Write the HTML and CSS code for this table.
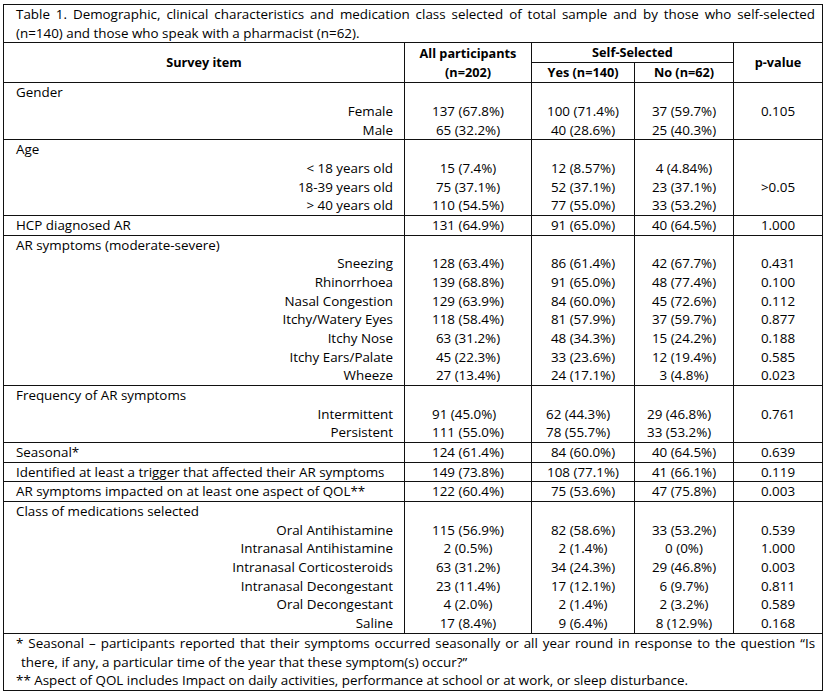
FILE: index.html
```html
<!DOCTYPE html>
<html>
<head>
<meta charset="utf-8">
<link rel="stylesheet" href="styles.css">
</head>
<body>
<table class="tbl">
  <colgroup>
    <col class="c1"><col class="c2"><col class="c3"><col class="c4"><col class="c5">
  </colgroup>
  <thead>
    <tr>
      <td colspan="5" class="title">
        <span class="jline">Table 1. Demographic, clinical characteristics and medication class selected of total sample and by those who self-selected</span>
        <span class="line">(n=140) and those who speak with a pharmacist (n=62).</span>
      </td>
    </tr>
    <tr class="hd">
      <th rowspan="2">Survey item</th>
      <th rowspan="2">All participants<br>(n=202)</th>
      <th colspan="2" class="ss">Self-Selected</th>
      <th rowspan="2">p-value</th>
    </tr>
    <tr class="hd">
      <th>Yes (n=140)</th>
      <th>No (n=62)</th>
    </tr>
  </thead>
  <tbody class="grp">
    <tr><td class="lbl">Gender</td><td></td><td></td><td></td><td></td></tr>
    <tr><td class="sub">Female</td><td>137 (67.8%)</td><td>100 (71.4%)</td><td>37 (59.7%)</td><td>0.105</td></tr>
    <tr><td class="sub">Male</td><td>65 (32.2%)</td><td>40 (28.6%)</td><td>25 (40.3%)</td><td></td></tr>
  </tbody>
  <tbody class="grp">
    <tr><td class="lbl">Age</td><td></td><td></td><td></td><td></td></tr>
    <tr><td class="sub">&lt; 18 years old</td><td>15 (7.4%)</td><td>12 (8.57%)</td><td>4 (4.84%)</td><td></td></tr>
    <tr><td class="sub">18-39 years old</td><td>75 (37.1%)</td><td>52 (37.1%)</td><td>23 (37.1%)</td><td>&gt;0.05</td></tr>
    <tr><td class="sub">&gt; 40 years old</td><td>110 (54.5%)</td><td>77 (55.0%)</td><td>33 (53.2%)</td><td></td></tr>
  </tbody>
  <tbody class="grp">
    <tr><td class="lbl">HCP diagnosed AR</td><td>131 (64.9%)</td><td>91 (65.0%)</td><td>40 (64.5%)</td><td>1.000</td></tr>
  </tbody>
  <tbody class="grp">
    <tr><td class="lbl">AR symptoms (moderate-severe)</td><td></td><td></td><td></td><td></td></tr>
    <tr><td class="sub">Sneezing</td><td>128 (63.4%)</td><td>86 (61.4%)</td><td>42 (67.7%)</td><td>0.431</td></tr>
    <tr><td class="sub">Rhinorrhoea</td><td>139 (68.8%)</td><td>91 (65.0%)</td><td>48 (77.4%)</td><td>0.100</td></tr>
    <tr><td class="sub">Nasal Congestion</td><td>129 (63.9%)</td><td>84 (60.0%)</td><td>45 (72.6%)</td><td>0.112</td></tr>
    <tr><td class="sub">Itchy/Watery Eyes</td><td>118 (58.4%)</td><td>81 (57.9%)</td><td>37 (59.7%)</td><td>0.877</td></tr>
    <tr><td class="sub">Itchy Nose</td><td>63 (31.2%)</td><td>48 (34.3%)</td><td>15 (24.2%)</td><td>0.188</td></tr>
    <tr><td class="sub">Itchy Ears/Palate</td><td>45 (22.3%)</td><td>33 (23.6%)</td><td>12 (19.4%)</td><td>0.585</td></tr>
    <tr><td class="sub">Wheeze</td><td>27 (13.4%)</td><td>24 (17.1%)</td><td>3 (4.8%)</td><td>0.023</td></tr>
  </tbody>
  <tbody class="grp">
    <tr><td class="lbl">Frequency of AR symptoms</td><td></td><td></td><td></td><td></td></tr>
    <tr><td class="sub">Intermittent</td><td class="fa">91 (45.0%)</td><td class="fy">62 (44.3%)</td><td class="fn">29 (46.8%)</td><td>0.761</td></tr>
    <tr><td class="sub">Persistent</td><td class="fa">111 (55.0%)</td><td class="fy">78 (55.7%)</td><td class="fn">33 (53.2%)</td><td></td></tr>
  </tbody>
  <tbody class="grp">
    <tr><td class="lbl">Seasonal*</td><td>124 (61.4%)</td><td>84 (60.0%)</td><td>40 (64.5%)</td><td>0.639</td></tr>
  </tbody>
  <tbody class="grp">
    <tr><td class="lbl">Identified at least a trigger that affected their AR symptoms</td><td>149 (73.8%)</td><td>108 (77.1%)</td><td>41 (66.1%)</td><td>0.119</td></tr>
  </tbody>
  <tbody class="grp">
    <tr><td class="lbl">AR symptoms impacted on at least one aspect of QOL**</td><td>122 (60.4%)</td><td>75 (53.6%)</td><td>47 (75.8%)</td><td>0.003</td></tr>
  </tbody>
  <tbody class="grp">
    <tr><td class="lbl">Class of medications selected</td><td></td><td></td><td></td><td></td></tr>
    <tr><td class="sub">Oral Antihistamine</td><td>115 (56.9%)</td><td>82 (58.6%)</td><td>33 (53.2%)</td><td>0.539</td></tr>
    <tr><td class="sub">Intranasal Antihistamine</td><td>2 (0.5%)</td><td>2 (1.4%)</td><td>0 (0%)</td><td>1.000</td></tr>
    <tr><td class="sub">Intranasal Corticosteroids</td><td>63 (31.2%)</td><td>34 (24.3%)</td><td>29 (46.8%)</td><td>0.003</td></tr>
    <tr><td class="sub">Intranasal Decongestant</td><td>23 (11.4%)</td><td>17 (12.1%)</td><td>6 (9.7%)</td><td>0.811</td></tr>
    <tr><td class="sub">Oral Decongestant</td><td>4 (2.0%)</td><td>2 (1.4%)</td><td>2 (3.2%)</td><td>0.589</td></tr>
    <tr><td class="sub">Saline</td><td>17 (8.4%)</td><td>9 (6.4%)</td><td>8 (12.9%)</td><td>0.168</td></tr>
  </tbody>
  <tfoot>
    <tr>
      <td colspan="5" class="note">
        <p class="fn1"><span class="jline">* Seasonal – participants reported that their symptoms occurred seasonally or all year round in response to the question “Is</span><span class="line">there, if any, a particular time of the year that these symptom(s) occur?”</span></p>
        <p class="fn2">** Aspect of QOL includes Impact on daily activities, performance at school or at work, or sleep disturbance.</p>
      </td>
    </tr>
  </tfoot>
</table>
</body>
</html>
```

FILE: styles.css
```css
html, body {
  margin: 0;
  padding: 0;
  background: #ffffff;
}

body {
  font-family: "Open Sans", "Noto Sans", sans-serif;
  font-size: 13.4px;
  color: #000000;
}

.tbl {
  margin: 4px 0 0 3px;
  border-collapse: collapse;
  border: 1px solid #111111;
  table-layout: fixed;
  width: 820px;
}

.c1 { width: 401px; }
.c2 { width: 127px; }
.c3 { width: 103px; }
.c4 { width: 99px; }
.c5 { width: 89px; }

.tbl td, .tbl th {
  padding: 0;
  line-height: 18.67px;
  border-left: 1px solid #111111;
  border-right: 1px solid #111111;
  text-align: center;
  vertical-align: middle;
  white-space: nowrap;
}

.title {
  text-align: left !important;
  padding: 0 7px 0 12px !important;
  border-bottom: 1px solid #111111;
  white-space: normal !important;
}

.jline {
  display: block;
  text-align: justify;
  text-align-last: justify;
}

.line {
  display: block;
}

.hd th {
  font-weight: bold;
  font-size: 12.7px;
  border-bottom: 1px solid #111111;
  line-height: 19px;
}

.hd .ss {
  border-bottom: 1px solid #111111;
}

.grp {
  border-top: 1px solid #111111;
}

.tbl td.lbl {
  text-align: left;
  padding-left: 12px;
}

.tbl td.sub {
  text-align: right;
  padding-right: 11px;
}

.tbl td.fa { text-align: left; padding-left: 27px; }
.tbl td.fy { text-align: left; padding-left: 14px; }
.tbl td.fn { text-align: left; padding-left: 12px; }

.note {
  text-align: left !important;
  padding: 0 7px 0 12px !important;
  border-top: 1px solid #111111;
  white-space: normal !important;
}

.note p {
  margin: 0;
}

.fn1 {
  padding-left: 5px;
}

.fn1 .jline {
  margin-left: -5px;
}
```
